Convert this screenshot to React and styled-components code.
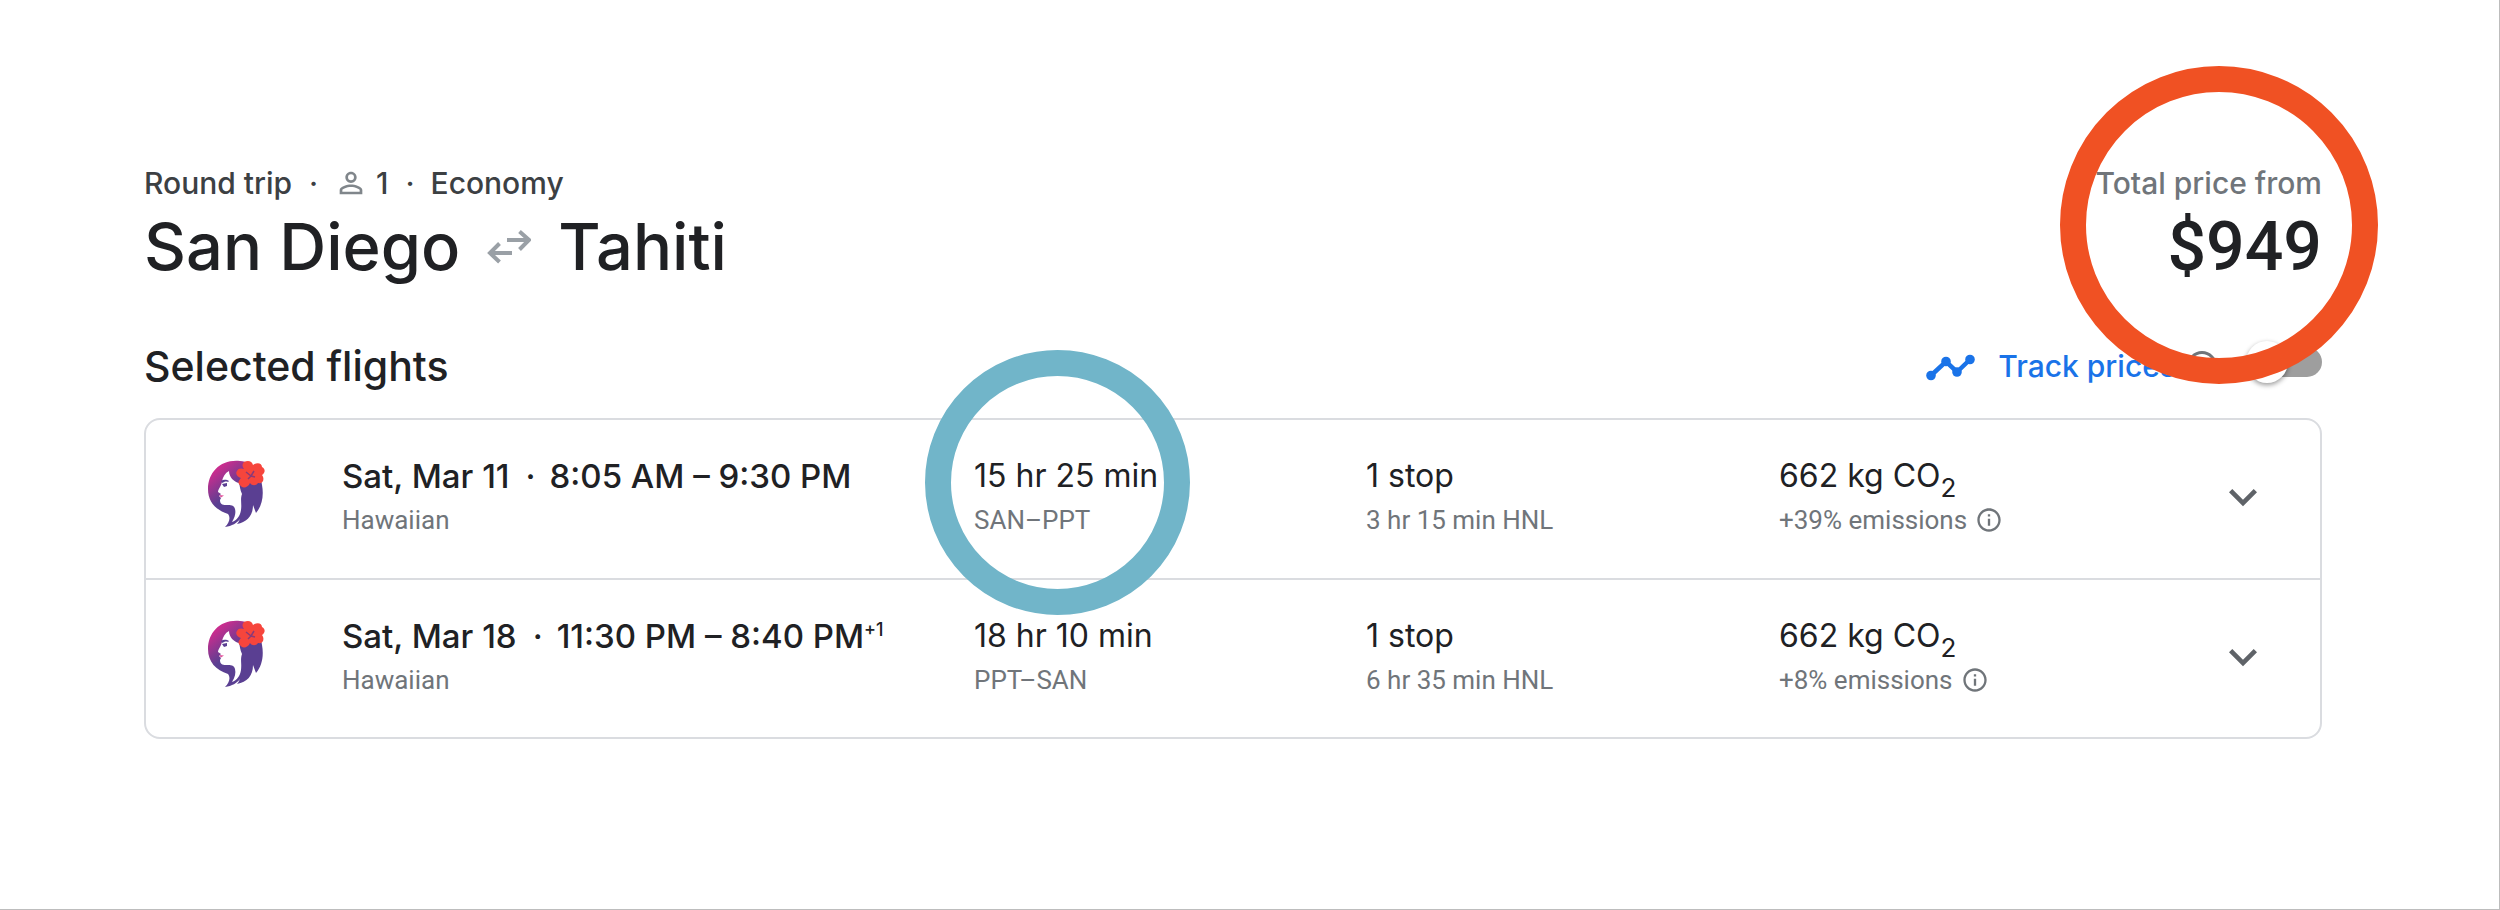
import styled, { createGlobalStyle } from "styled-components";
import { MdExpandMore, MdInfoOutline, MdPersonOutline } from "react-icons/md";

const flights = [
  {
    id: "outbound",
    date: "Sat, Mar 11",
    times: "8:05 AM – 9:30 PM",
    airline: "Hawaiian",
    duration: "15 hr 25 min",
    route: "SAN–PPT",
    stops: "1 stop",
    layover: "3 hr 15 min HNL",
    co2: "662 kg CO",
    emissions: "+39% emissions",
    highlight: true,
  },
  {
    id: "return",
    date: "Sat, Mar 18",
    times: "11:30 PM – 8:40 PM",
    dayOffset: "+1",
    airline: "Hawaiian",
    duration: "18 hr 10 min",
    route: "PPT–SAN",
    stops: "1 stop",
    layover: "6 hr 35 min HNL",
    co2: "662 kg CO",
    emissions: "+8% emissions",
  },
];

function SwapArrows() {
  return (
    <svg width="44" height="34" viewBox="0 0 44 34" fill="none" stroke="#9aa0a6" strokeWidth="4" aria-hidden="true">
      <path d="M20 10H42M32.500 1.500L42 10L32.500 19.500" />
      <path d="M25 23H3M12.500 13.500L3 23L12.500 32" />
    </svg>
  );
}

function TrendIcon() {
  return (
    <svg width="50" height="30" viewBox="0 0 50 30" fill="#1a73e8" aria-hidden="true">
      <path d="M5 24.500L20 10.500L31 21L44 8.500" fill="none" stroke="#1a73e8" strokeWidth="4.500" />
      <circle cx="5" cy="24.500" r="4.800" />
      <circle cx="20" cy="10.500" r="4.800" />
      <circle cx="31" cy="21" r="4.800" />
      <circle cx="44" cy="8.500" r="4.800" />
    </svg>
  );
}

function HawaiianLogo({ id }) {
  return (
    <svg width="66" height="76" viewBox="0 0 66 76" role="img" aria-label="Hawaiian Airlines">
      <defs>
        <linearGradient id={id} x1="10" y1="10" x2="34" y2="40" gradientUnits="userSpaceOnUse">
          <stop offset="0.150" stopColor="#c92d8e" />
          <stop offset="0.850" stopColor="#5a3f92" />
        </linearGradient>
      </defs>
      <path
        fill={`url(#${id})`}
        d="M38 5C19 3 6 16 6 33C6 46 14 54 26 58C29 62 27 67 23 71C30 70 35 67 38 63C37 65 36 67 35 68C45 66 51 60 51 49L54 57C60 50 62 40 60 29C58 14 50 6 38 5Z"
      />
      <path
        fill="#fff"
        d="M27 15C23 17 21 21 20 25C20 29 16 33 16 36L19 38L17 40L19 42L18 44C18 48 20 49 24 49C29 49 32 49 33 53C34 57 33 61 30 66C35 64 38 60 39 54C40 47 38 44 40 38C38 34 38 30 37 27C32 26 27 21 27 15Z"
      />
      <path fill="#5a3f92" d="M19 25C22 23 25 24 27 25L26 26C24 25 22 26 20 27ZM20 28L25 27L25 30L22 31Z" />
      <path fill="#e0509a" d="M17 39L22 39.500L19 41.500Z" />
      <path
        fill="#f6453c"
        d="M42 6C46 4 50 5 51 9C55 6 60 7 60 11C64 13 63 17 60 19C63 23 61 28 56 27C54 30 50 30 48 27C46 32 40 33 38 29C35 27 37 24 39 22C35 21 33 17 35 15C36 12 40 12 42 13C40 10 40 8 42 6Z"
      />
      <path d="M44 16L49 20L52 15M49 20L46 23M49 20L53 21" fill="none" stroke="#8a3a78" strokeWidth="1.500" />
    </svg>
  );
}

function FlightRow({ flight }) {
  return (
    <Row>
      <HawaiianLogo id={`logo-${flight.id}`} />
      <div>
        <Times>
          {flight.date}
          <Dot $space={16}>·</Dot>
          {flight.times}
          {flight.dayOffset && <sup>{flight.dayOffset}</sup>}
        </Times>
        <Detail>{flight.airline}</Detail>
      </div>
      <Cell>
        <Value>{flight.duration}</Value>
        <Detail>{flight.route}</Detail>
        {flight.highlight && <DurationRing />}
      </Cell>
      <div>
        <Value>{flight.stops}</Value>
        <Detail>{flight.layover}</Detail>
      </div>
      <div>
        <Value>
          {flight.co2}
          <sub>2</sub>
        </Value>
        <Detail>
          {flight.emissions}
          <IconButton aria-label="About emissions">
            <MdInfoOutline size={28} />
          </IconButton>
        </Detail>
      </div>
      <ExpandButton aria-label="Flight details">
        <MdExpandMore size={56} />
      </ExpandButton>
    </Row>
  );
}

export default function App() {
  return (
    <Page>
      <GlobalStyle />
      <Header>
        <div>
          <TripInfo>
            Round trip
            <Dot>·</Dot>
            <Passengers>
              <MdPersonOutline size={34} color="#80868b" />1
            </Passengers>
            <Dot>·</Dot>
            Economy
          </TripInfo>
          <Title>
            San Diego
            <SwapArrows />
            Tahiti
          </Title>
        </div>
        <PriceBlock>
          <PriceLabel>Total price from</PriceLabel>
          <Price>$949</Price>
          <PriceRing />
        </PriceBlock>
      </Header>

      <SectionBar>
        <SectionTitle>Selected flights</SectionTitle>
        <TrackPrices>
          <TrendIcon />
          <TrackLabel htmlFor="track">Track prices</TrackLabel>
          <IconButton aria-label="About price tracking">
            <MdInfoOutline size={36} />
          </IconButton>
          <Switch id="track" type="checkbox" role="switch" />
        </TrackPrices>
      </SectionBar>

      <FlightList>
        {flights.map((flight) => (
          <FlightRow key={flight.id} flight={flight} />
        ))}
      </FlightList>
    </Page>
  );
}

const GlobalStyle = createGlobalStyle`
  * {
    box-sizing: border-box;
  }

  body {
    margin: 0;
    background-color: #fff;
    color: #202124;
    font-family: Inter, Roboto, sans-serif;
  }

  button {
    padding: 0;
    border: none;
    background: none;
    cursor: pointer;
  }

  svg {
    display: block;
    flex-shrink: 0;
  }
`;

const Page = styled.main`
  min-height: 100vh;
  padding: 163px 177px 100px 144px;
  border-right: 1px solid #bdbdbd;
  border-bottom: 1px solid #bdbdbd;
`;

const Header = styled.header`
  display: flex;
  justify-content: space-between;
  margin-bottom: 45px;
`;

const TripInfo = styled.div`
  display: flex;
  align-items: center;
  font-size: 30px;
  font-weight: 500;
  line-height: 40px;
  color: #3c4043;
`;

const Dot = styled.span`
  display: inline-block;
  width: 8px;
  margin: 0 ${(props) => props.$space || 17}px;
  text-align: center;
`;

const Passengers = styled.span`
  display: flex;
  align-items: center;
  gap: 8px;
`;

const Title = styled.h1`
  display: flex;
  align-items: center;
  gap: 27px;
  margin: 0;
  font-size: 65px;
  font-weight: 500;
  line-height: 88px;
`;

const PriceBlock = styled.div`
  position: relative;
  text-align: right;
`;

const PriceLabel = styled.div`
  font-size: 30px;
  font-weight: 500;
  line-height: 40px;
  color: #70757a;
`;

const Price = styled.div`
  font-family: Roboto, sans-serif;
  font-size: 68px;
  font-weight: 500;
  line-height: 88px;
`;

const Ring = styled.div`
  position: absolute;
  z-index: 1;
  border-radius: 50%;
  pointer-events: none;
`;

const PriceRing = styled(Ring)`
  top: -97px;
  right: -56px;
  width: 318px;
  height: 318px;
  border: 26px solid #f05123;
`;

const DurationRing = styled(Ring)`
  top: -106px;
  left: -49px;
  width: 265px;
  height: 265px;
  border: 26px solid #71b5c9;
`;

const SectionBar = styled.div`
  display: flex;
  align-items: center;
  justify-content: space-between;
  margin-bottom: 22px;
`;

const SectionTitle = styled.h2`
  margin: 0;
  font-size: 41px;
  font-weight: 500;
  line-height: 60px;
`;

const TrackPrices = styled.div`
  display: flex;
  align-items: center;
`;

const TrackLabel = styled.label`
  margin: 0 8px 0 22px;
  font-size: 30px;
  font-weight: 500;
  color: #1a73e8;
`;

const IconButton = styled.button`
  color: #70757a;
`;

const Switch = styled.input`
  appearance: none;
  position: relative;
  width: 76px;
  height: 30px;
  margin: 0 0 8px 26px;
  border-radius: 15px;
  background-color: #9e9e9e;
  cursor: pointer;

  &::before {
    content: "";
    position: absolute;
    top: -6px;
    left: 0;
    width: 42px;
    height: 42px;
    border-radius: 50%;
    background-color: #fff;
    box-shadow: 0 2px 5px rgba(0, 0, 0, 0.4);
  }

  &:checked::before {
    left: 34px;
    background-color: #1a73e8;
  }
`;

const FlightList = styled.ul`
  margin: 0;
  padding: 0;
  list-style: none;
  border: 2px solid #dadce0;
  border-radius: 16px;
`;

const Row = styled.li`
  display: grid;
  grid-template-columns: 140px 632fr 392fr 413fr 434fr 60px;
  padding: 36px 47px 34px 56px;

  & + & {
    padding-bottom: 33px;
    border-top: 2px solid #dadce0;
  }
`;

const Cell = styled.div`
  position: relative;
`;

const Value = styled.div`
  font-size: 32px;
  line-height: 40px;
  white-space: nowrap;

  sub {
    font-size: 26px;
    line-height: 0;
    vertical-align: -10px;
  }
`;

const Times = styled(Value)`
  font-size: 33px;
  font-weight: 500;

  sup {
    font-size: 18px;
    line-height: 0;
    vertical-align: 12px;
  }
`;

const Detail = styled.div`
  display: flex;
  align-items: center;
  gap: 8px;
  font-family: Roboto, sans-serif;
  font-size: 26px;
  line-height: 48px;
  color: #70757a;
`;

const ExpandButton = styled.button`
  display: flex;
  align-items: center;
  justify-content: center;
  padding-bottom: 6px;
  color: #5f6368;
`;
